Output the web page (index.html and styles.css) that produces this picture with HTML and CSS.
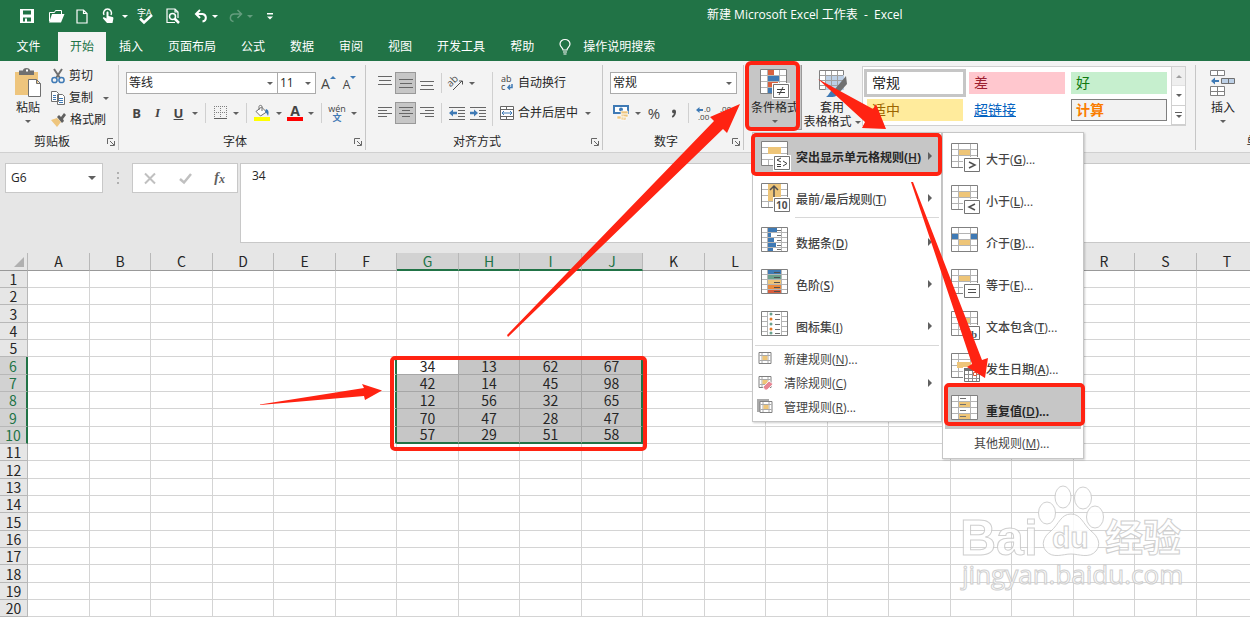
FILE: index.html
```html
<!DOCTYPE html>
<html lang="zh-CN">
<head>
<meta charset="utf-8">
<title>新建 Microsoft Excel 工作表 - Excel</title>
<link rel="stylesheet" href="styles.css">
</head>
<body>
<svg class="defs" aria-hidden="true">
  <symbol id="grid" viewBox="0 0 30 30">
    <path fill="#fff" stroke="#808080" d="M.5.5h26v24H.5z"/>
    <path fill="none" stroke="#b4b4b4" d="M1 6.500h25M1 12.500h25M1 18.500h25M7.500 1v23M19.500 1v23"/>
  </symbol>
  <symbol id="badge" viewBox="0 0 30 30">
    <path fill="#fff" d="M12 14h18v16H12z"/>
    <path fill="#fff" stroke="#737373" d="M13.500 15.500h15v13h-15z"/>
  </symbol>
  <symbol id="rows" viewBox="0 0 30 30">
    <path fill="#fff" stroke="#808080" d="M.5.5h26v24H.5z"/>
    <path fill="none" stroke="#b4b4b4" d="M1 5.500h25M1 10.500h25M1 15.500h25M1 20.500h25M6.500 1v23M20.500 1v23"/>
  </symbol>
  <symbol id="mini" viewBox="0 0 16 16">
    <path fill="#fff" stroke="#808080" d="M1.500 1.500h12v11h-12z"/>
    <path fill="none" stroke="#aaa" d="M2 4.500h11M2 9.500h11M4.500 2v10M10.500 2v10"/>
    <path fill="#eec578" d="M5 5h5v4H5z"/>
  </symbol>
  <symbol id="launch" viewBox="0 0 10 10">
    <path fill="none" stroke="#666" d="M1.500 7V1.500H7M4 4l4 4M8.500 4v4.500H4"/>
  </symbol>
</svg>

<div class="app">
<header class="titlebar">
  <div class="qat">
    <button aria-label="保存"><svg width="14" height="14"><path fill="#fff" fill-rule="evenodd" d="M0 0h14v14H0zM3 1.500v4h8v-4zM3 8.500v4h2v-3h2v3h4v-4z"/></svg></button>
    <button aria-label="打开"><svg width="17" height="14"><path fill="none" stroke="#fff" d="M1.500 12V3.500h5l1-2h6V5"/><path fill="#fff" d="M4 5h12.500L13 13.500H1z"/></svg></button>
    <button aria-label="新建"><svg width="12" height="15"><path fill="none" stroke="#fff" stroke-width="1.200" d="M1 1h6.500L11 4.500V14H1zM7.500 1v3.500H11"/></svg></button>
    <button class="touch" aria-label="触摸模式"><svg width="14" height="16"><path fill="none" stroke="#fff" stroke-width="1.500" d="M2 7a4 4 0 1 1 7 0"/><path fill="#fff" d="M4.500 4.500c0-1.500 2-1.500 2 0V8l4 1c1 .3 1 1 .8 2l-.8 4H5L1 10.500c-.5-1 .8-1.500 1.500-.9l2 1z"/></svg><i class="caret"></i></button>
    <button aria-label="拼写检查" class="spell"><svg width="18" height="17"><text x="0" y="8" font-size="9" fill="#fff">字A</text><path fill="none" stroke="#fff" stroke-width="2.500" d="M3 10.500l4 4L15 7"/></svg></button>
    <button aria-label="打印预览"><svg width="14" height="16"><path fill="none" stroke="#fff" stroke-width="1.200" d="M9 14.500H1V1h8l3 3v6M9 1v3h3"/><circle cx="6.500" cy="8.500" r="3" fill="none" stroke="#fff" stroke-width="1.500"/><path stroke="#fff" stroke-width="2.500" d="M8.500 10.500l4.500 4.500"/></svg></button>
    <button class="undo" aria-label="撤消"><svg width="14" height="14"><path fill="none" stroke="#fff" stroke-width="2" d="M2 5h6.500a4 3.800 0 0 1 0 7.500"/><path fill="none" stroke="#fff" stroke-width="2" d="M6 1L2 5l4 4"/></svg><i class="caret"></i></button>
    <button class="undo faded" aria-label="恢复"><svg width="14" height="14"><path fill="none" stroke="#fff" stroke-width="1.500" d="M12 5H5.500a4 3.800 0 0 0-1 7.500M8.500 1l4 4-4 4"/></svg><i class="caret"></i></button>
    <button class="more" aria-label="自定义快速访问工具栏"><svg width="6" height="7"><path fill="#fff" d="M0 0h6v1.500H0zM0 3.500h6L3 6.500z"/></svg></button>
  </div>
  <h1>新建 Microsoft Excel 工作表 &nbsp;-&nbsp; Excel</h1>
</header>
<nav class="tabs">
  <button class="file">文件</button>
  <button class="on">开始</button>
  <button>插入</button>
  <button>页面布局</button>
  <button>公式</button>
  <button>数据</button>
  <button>审阅</button>
  <button>视图</button>
  <button>开发工具</button>
  <button>帮助</button>
  <button class="tell"><svg width="12" height="16"><path fill="none" stroke="#fff" stroke-width="1.200" d="M4 11C4 8.500 1 8 1 5a5 4.500 0 0 1 10 0c0 3-3 3.500-3 6zM4 13h4M4.500 15h3"/></svg>操作说明搜索</button>
</nav>

<section class="ribbon">
  <div class="group clip">
    <div class="body">
      <button class="big paste"><svg width="28" height="30"><path fill="#eec57d" d="M1 4h23v23H1z"/><path fill="#707070" d="M5 2.500h4a3.500 2.500 0 0 1 7 0h4V7H5z"/><path fill="#fff" d="M12 1.500h2v2h-2z"/><path fill="#fff" stroke="#707070" d="M14.500 11.500h8l4 4v13h-12zM22.500 11.500v4h4"/></svg>粘贴<i class="caret"></i></button>
      <div class="stack">
        <button><svg width="14" height="15"><path stroke="#707070" stroke-width="2" d="M3 0l6 9M11 0L5 9"/><g fill="none" stroke="#3f7ab5" stroke-width="1.500"><circle cx="3.500" cy="11" r="2.600"/><circle cx="10.500" cy="11" r="2.600"/></g></svg>剪切</button>
        <button><svg width="14" height="14"><path fill="#fff" stroke="#707070" d="M.5.5h5l2 2v8h-7zM6.500 3.500h5l2 2v8h-7z"/><path stroke="#3f7ab5" d="M2 4.500h3M2 6.500h3M2 8.500h3M8 7.500h4M8 9.500h4M8 11.500h4"/></svg>复制<i class="caret"></i></button>
        <button><svg width="15" height="14"><path fill="#eec57d" d="M0 7l6-2 4 4-4 5z"/><path fill="#606060" d="M6 4l2-2 2 2 3-4 2 2-3 4 1 2-2 2z"/></svg>格式刷</button>
      </div>
    </div>
    <footer><span>剪贴板</span><svg class="launch"><use href="#launch"/></svg></footer>
  </div>

  <div class="group font">
    <div class="body rows">
      <div class="row">
        <label class="combo wide"><select aria-label="字体"><option>等线</option></select><i class="caret"></i></label>
        <label class="combo size"><select aria-label="字号"><option>11</option></select><i class="caret"></i></label>
        <button class="t21 grow" aria-label="增大字号"><span>A</span><i class="up"></i></button>
        <button class="t21 shrink" aria-label="减小字号"><span>A</span><i class="down"></i></button>
      </div>
      <div class="row">
        <button class="t21"><b>B</b></button>
        <button class="t21 serif"><i>I</i></button>
        <button class="t21"><u><b>U</b></u></button>
        <button class="drop" aria-label="下划线"><i class="caret"></i></button>
        <i class="sep"></i>
        <button class="t20" aria-label="边框"><svg width="13" height="14"><path fill="none" stroke="#808080" stroke-dasharray="1 1" d="M.5 0v12M6.500 0v12M12.500 0v12M0 .5h13M0 6.500h13"/><path stroke="#606060" d="M0 12.500h13"/></svg></button>
        <button class="drop" aria-label="边框选项"><i class="caret"></i></button>
        <i class="sep"></i>
        <button class="t22" aria-label="填充颜色"><svg width="16" height="16"><path fill="#fff" stroke="#707070" d="M2 6.500L7.500 2l5 5-6 4zM5 5V1.500c0-1.500 3-1.500 3 0V6"/><path fill="#3f7ab5" d="M12 4c3 1 3 4 2 7-1-2-1-3-3-4z"/><path fill="#ff0" d="M0 12h16v4H0z"/></svg></button>
        <button class="drop" aria-label="填充颜色选项"><i class="caret"></i></button>
        <button class="t20 color" aria-label="字体颜色"><b>A</b></button>
        <button class="drop" aria-label="字体颜色选项"><i class="caret"></i></button>
        <i class="sep"></i>
        <button class="t22 wen" aria-label="拼音"><span>wén</span><span class="blue">文</span></button>
        <button class="drop" aria-label="拼音选项"><i class="caret"></i></button>
      </div>
    </div>
    <footer><span>字体</span><svg class="launch"><use href="#launch"/></svg></footer>
  </div>

  <div class="group align">
    <div class="body">
      <div class="rows">
        <div class="row">
          <button class="t21" aria-label="顶端对齐"><svg width="14" height="14"><path stroke="#666" d="M0 .5h14M1 4.500h12M0 8.500h14"/></svg></button>
          <button class="t21 pressed" aria-label="垂直居中"><svg width="14" height="14"><path stroke="#666" d="M0 3.500h14M1 7.500h12M0 11.500h14"/></svg></button>
          <button class="t21" aria-label="底端对齐"><svg width="14" height="14"><path stroke="#666" d="M0 5.500h14M1 9.500h12M0 13.500h14"/></svg></button>
          <i class="sep"></i>
          <button class="t20" aria-label="方向"><svg width="16" height="16"><text transform="rotate(-45 6 9)" x="1" y="9" font-size="10" fill="#505050">ab</text><path fill="none" stroke="#505050" d="M5 15L14 6M11 6h3.500v3.500"/></svg></button>
          <button class="drop" aria-label="方向选项"><i class="caret"></i></button>
        </div>
        <div class="row">
          <button class="t21" aria-label="左对齐"><svg width="14" height="14"><path stroke="#666" d="M0 1.500h14M0 4.500h9M0 7.500h14M0 10.500h9"/></svg></button>
          <button class="t21 pressed" aria-label="居中"><svg width="14" height="14"><path stroke="#666" d="M0 1.500h14M3 4.500h8M0 7.500h14M3 10.500h8"/></svg></button>
          <button class="t21" aria-label="右对齐"><svg width="14" height="14"><path stroke="#666" d="M0 1.500h14M5 4.500h9M0 7.500h14M5 10.500h9"/></svg></button>
          <i class="sep"></i>
          <button class="t21" aria-label="减少缩进"><svg width="16" height="13"><path stroke="#666" d="M0 .5h16M9 3.500h7M9 6.500h7M9 9.500h7M0 12.500h16"/><path fill="#3f7ab5" d="M0 6l4-3.500v2.300h4v2.400H4v2.300z"/></svg></button>
          <button class="t21" aria-label="增加缩进"><svg width="16" height="13"><path stroke="#666" d="M0 .5h16M9 3.500h7M9 6.500h7M9 9.500h7M0 12.500h16"/><path fill="#3f7ab5" d="M8 6L4 2.500v2.300H0v2.400h4v2.300z"/></svg></button>
        </div>
      </div>
      <i class="sep tall"></i>
      <div class="rows">
        <button class="row text"><svg width="14" height="16"><text x="1" y="7" font-size="9" fill="#404040">ab</text><text x="1" y="15" font-size="9" fill="#404040">c</text><path fill="none" stroke="#3f7ab5" stroke-width="1.500" d="M12 9v3.500H8M10 10l-2 2.500 2 2"/></svg>自动换行</button>
        <div class="row"><button class="row text"><svg width="14" height="14"><path fill="#fff" stroke="#666" d="M.5.5h13v13H.5zM.5 3.500h13M.5 10.500h13M6.500.5v3M6.500 10.500v3"/><path fill="none" stroke="#3f7ab5" d="M2 7h10M4 5L2 7l2 2M10 5l2 2-2 2"/></svg>合并后居中</button><button class="drop mrg" aria-label="合并选项"><i class="caret"></i></button></div>
      </div>
    </div>
    <footer><span>对齐方式</span><svg class="launch"><use href="#launch"/></svg></footer>
  </div>

  <div class="group number">
    <div class="body rows">
      <div class="row"><label class="combo format"><select aria-label="数字格式"><option>常规</option></select><i class="caret"></i></label></div>
      <div class="row">
        <button class="t22" aria-label="会计数字格式"><svg width="16" height="16"><path fill="#fff" stroke="#3f7ab5" stroke-width="2" d="M1 1h14v7H1z"/><circle cx="8" cy="4.500" r="2" fill="#3f7ab5"/><path fill="#eec57d" stroke="#fff" stroke-width=".6" d="M8 6h7v3H8zM8 9h7v3H8zM4 11h7v3H4zM8 12h5v3H8z"/></svg></button>
        <button class="drop" aria-label="会计数字格式选项"><i class="caret"></i></button>
        <button class="t20 pct">%</button>
        <button class="t20" aria-label="千位分隔样式"><svg width="6" height="9"><circle cx="3" cy="2.500" r="2" fill="#505050"/><path fill="none" stroke="#505050" stroke-width="1.500" d="M4.200 2.500c0 3-1 4.500-3 5.500"/></svg></button>
        <i class="sep"></i>
        <button class="t22" aria-label="增加小数位数"><svg width="16" height="15"><text x="8" y="6" font-size="8" fill="#404040">.0</text><text x="2" y="14" font-size="8" fill="#404040">.00</text><path fill="#3f7ab5" d="M0 4l3.500-3v2H7v2H3.500v2z"/></svg></button>
        <button class="t22" aria-label="减少小数位数"><svg width="16" height="15"><text x="2" y="6" font-size="8" fill="#404040">.00</text><text x="8" y="14" font-size="8" fill="#404040">.0</text><path fill="#3f7ab5" d="M8 11L4.500 8v2H1v2h3.500v2z"/></svg></button>
      </div>
    </div>
    <footer><span>数字</span><svg class="launch"><use href="#launch"/></svg></footer>
  </div>

  <div class="group styles">
    <div class="body">
      <button class="big cf"><svg width="30" height="30"><use href="#grid" width="30" height="30"/><path fill="#d9613f" d="M8 1h6v5H8zM8 13h10v5H8z"/><path fill="#3f7ab5" d="M8 7h11v5H8zM8 19h5v5H8z"/><use href="#badge" width="30" height="30"/><path fill="none" stroke="#404040" d="M17 20.500h8M17 23.500h8M23 18l-4 8"/></svg>条件格式<i class="caret"></i></button>
      <button class="big fmt"><svg width="30" height="28"><path fill="#fff" stroke="#808080" d="M2.500.5h24v19h-24z"/><path fill="#bdd0e6" d="M8 5h19v15H8z"/><path fill="none" stroke="#a0a0a0" d="M3 5.500h23M3 10.500h23M3 15.500h23M8.500 1v19M14.500 1v19M20.500 1v19"/><path fill="#707070" d="M29 6l1 8-8 9-4-4z"/><path fill="#3f7ab5" d="M18 19l4 4c-3 5-8 4-13 4 4-2 3-7 9-8z"/></svg>套用<span>表格格式<i class="caret"></i></span></button>
      <div class="gallery">
        <div class="tiles">
          <button class="normal">常规</button><button class="bad">差</button><button class="good">好</button>
          <button class="neutral">适中</button><button class="hyper">超链接</button><button class="calc">计算</button>
        </div>
        <div class="scroller"><button class="off" aria-label="上"><i class="caret flip"></i></button><button aria-label="下"><i class="caret"></i></button><button aria-label="其他"><i class="bar"></i><i class="caret"></i></button></div>
      </div>
    </div>
    <footer></footer>
  </div>

  <div class="group cells">
    <div class="body">
      <button class="big"><svg width="26" height="28"><path fill="#fff" stroke="#808080" d="M.5 1.500h14v5H.5zM7.500 1.500v5M.5 17.500h14v9H.5zM7.500 17.500v9M.5 22.500h14"/><path fill="#bdd0e6" stroke="#707070" d="M11.500 9.500h13v5h-13zM18.500 9.500v5"/><path fill="#3f7ab5" d="M1 12l4-3.500V11h4v2H5v2.500z"/></svg>插入<i class="caret"></i></button>
    </div>
    <footer><span>单元格</span></footer>
  </div>
</section>

<section class="formula">
  <label class="combo namebox"><input aria-label="名称框" value="G6"><i class="caret"></i></label>
  <div class="dots"><i></i><i></i><i></i></div>
  <div class="fx">
    <button aria-label="取消"><svg width="12" height="11"><path stroke="#c0c0c0" stroke-width="2" d="M1 .5l10 10M11 .5l-10 10"/></svg></button>
    <button aria-label="输入"><svg width="13" height="11"><path fill="none" stroke="#c0c0c0" stroke-width="2.500" d="M1 6l4 3.500L12 1"/></svg></button>
    <button class="fn">f<small>x</small></button>
  </div>
  <textarea aria-label="编辑栏">34</textarea>
</section>

<main class="sheet"><table id="sheet"></table></main>
</div>

<div class="menu rules" role="menu">
  <button class="item on"><svg class="ic"><use href="#grid" width="30" height="30"/><path fill="#fff" d="M7 1h13v5H7zM7 13h13v5H7z"/><path fill="#eec578" d="M7 6h13v7H7z"/><use href="#badge" width="30" height="30"/><path fill="none" stroke="#404040" d="M20 17l-4 2 4 2M16 23.500h4M16 25.500h4M22 20l4 2.500-4 2.500"/></svg><span>突出显示单元格规则(<u>H</u>)</span><i class="arrow"></i></button>
  <button class="item"><svg class="ic"><use href="#grid" width="30" height="30"/><path fill="#eec578" d="M7 1h13v17H7z"/><path fill="none" stroke="#505050" stroke-width="1.500" d="M13 14V3M9 7l4-4 4 4"/><use href="#badge" width="30" height="30"/><text x="15" y="26" font-size="10" font-weight="700" fill="#505050">10</text></svg><span>最前/最后规则(<u>T</u>)</span><i class="arrow"></i></button>
  <hr class="inset">
  <button class="item"><svg class="ic"><use href="#rows" width="30" height="30"/><path fill="#3f7ab5" d="M7 1h9v4H7zM7 6h3v4H7zM7 11h6v4H7zM7 16h8v4H7zM7 21h5v3H7z"/><path stroke="#707070" d="M16 3.500h4M16 8.500h4M16 13.500h4M16 18.500h4M16 22.500h4"/></svg><span>数据条(<u>D</u>)</span><i class="arrow"></i></button>
  <button class="item"><svg class="ic"><use href="#rows" width="30" height="30"/><path fill="#3f7ab5" d="M7 1h13v4H7z"/><path fill="#6aa08d" d="M7 6h13v4H7z"/><path fill="#eec578" d="M7 11h13v4H7z"/><path fill="#ea8b3c" d="M7 16h13v4H7z"/><path fill="#d65e3e" d="M7 21h13v3H7z"/><path stroke="#505050" d="M13 3.500h6M13 8.500h6M13 13.500h6M13 18.500h6M13 22.500h6"/></svg><span>色阶(<u>S</u>)</span><i class="arrow"></i></button>
  <button class="item"><svg class="ic"><use href="#rows" width="30" height="30"/><path fill="#fff" d="M7 1h13v23H7z"/><g fill="#6aa08d"><circle cx="10" cy="3" r="1.500"/><circle cx="10" cy="13" r="1.500"/><circle cx="10" cy="22" r="1.500"/></g><g fill="#e87722"><circle cx="10" cy="8" r="1.500"/><circle cx="10" cy="18" r="1.500"/></g><path stroke="#707070" d="M14 3.500h5M14 8.500h5M14 13.500h5M14 18.500h5M14 22.500h5"/></svg><span>图标集(<u>I</u>)</span><i class="arrow"></i></button>
  <hr>
  <button class="item small"><svg class="mi"><use href="#mini"/></svg><span>新建规则(<u>N</u>)...</span></button>
  <button class="item small"><svg class="mi"><use href="#mini"/><path fill="#e88593" stroke="#fff" stroke-width=".8" d="M6 12l6-6 4 3-6 6H8z"/></svg><span>清除规则(<u>C</u>)</span><i class="arrow"></i></button>
  <button class="item small"><svg class="mi"><path fill="#aaa" d="M0 0h12v3H3v10H0z"/><use href="#mini" x="1" y="1"/></svg><span>管理规则(<u>R</u>)...</span></button>
</div>

<div class="menu compare" role="menu">
  <button class="item"><svg class="ic"><use href="#grid" width="30" height="30"/><path fill="#eec578" d="M8 7h11v5H8z"/><use href="#badge" width="30" height="30"/><path fill="none" stroke="#505050" stroke-width="1.500" d="M18 19l6 3-6 3"/></svg><span>大于(<u>G</u>)...</span></button>
  <button class="item"><svg class="ic"><use href="#grid" width="30" height="30"/><path fill="#eec578" d="M8 7h11v5H8z"/><use href="#badge" width="30" height="30"/><path fill="none" stroke="#505050" stroke-width="1.500" d="M24 19l-6 3 6 3"/></svg><span>小于(<u>L</u>)...</span></button>
  <button class="item"><svg class="ic"><use href="#grid" width="30" height="30"/><path fill="#3f7ab5" d="M1 7h6v5H1zM20 7h6v5h-6z"/><path fill="#eec578" d="M8 13h11v5H8z"/></svg><span>介于(<u>B</u>)...</span></button>
  <button class="item"><svg class="ic"><use href="#grid" width="30" height="30"/><path fill="#eec578" d="M8 7h11v5H8z"/><use href="#badge" width="30" height="30"/><path stroke="#505050" d="M17 20.500h8M17 23.500h8"/></svg><span>等于(<u>E</u>)...</span></button>
  <button class="item"><svg class="ic"><use href="#grid" width="30" height="30"/><path fill="#eec578" d="M14 7h5v5h-5z"/><use href="#badge" width="30" height="30"/><text x="20" y="27" font-size="11" font-family="Liberation Serif" font-weight="700" fill="#505050">b</text></svg><span>文本包含(<u>T</u>)...</span></button>
  <button class="item"><svg class="ic"><use href="#grid" width="30" height="30"/><path fill="#eec578" d="M6 9h14v6H6z"/><use href="#badge" width="30" height="30"/><path fill="#707070" d="M13 15h16v3H13z"/><path fill="none" stroke="#909090" d="M14 21.500h14M14 25.500h14M17.500 18v10M21.500 18v10M25.500 18v10"/><path fill="#fff" stroke="#d65e3e" d="M22.500 19.500h3v3h-3z"/></svg><span>发生日期(<u>A</u>)...</span></button>
  <button class="item on"><svg class="ic"><use href="#grid" width="30" height="30"/><path fill="#eec578" d="M8 7h11v5H8zM8 19h11v5H8z"/><path stroke="#707070" d="M9 3.500h6M9 9.500h6M9 15.500h6M9 21.500h6"/></svg><span>重复值(<u>D</u>)...</span></button>
  <button class="item other"><span>其他规则(<u>M</u>)...</span></button>
</div>

<svg class="overlay watermark" width="260" height="130" aria-label="Baidu 经验">
  <g fill="#fff" stroke="#c8c8c8">
    <text class="brand" x="18" y="80" font-size="50">Bai</text>
    <ellipse cx="105" cy="38" rx="8.500" ry="11"/><ellipse cx="121" cy="22" rx="8" ry="11"/><ellipse cx="141" cy="23" rx="8.500" ry="11"/><ellipse cx="153" cy="42" rx="8.500" ry="11"/>
    <path d="M129 39c10 0 12 10 20 17 8 6 10 14 5 20-7 8-17 3-25 3s-18 5-25-3c-5-6-3-14 5-20 8-7 10-17 20-17z"/>
    <text class="brand" x="110" y="73" font-size="30">du</text>
    <text class="cn" x="163" y="76" font-size="38">经验</text>
    <text class="url" x="20" y="109" font-size="26">jingyan.baidu.com</text>
  </g>
</svg>

<svg class="overlay marks" width="1250" height="618" aria-hidden="true">
  <g fill="none" stroke="#ff2312" stroke-width="4">
    <rect x="747" y="63" width="51" height="66" rx="4"/>
    <rect x="753" y="135" width="187" height="39" rx="3"/>
    <rect x="946" y="385" width="137" height="39" rx="3"/>
    <rect x="392" y="358" width="253" height="91" rx="3"/>
  </g>
  <g fill="#ff2312">
    <path d="M260 404.500L364 388l-2-4 20 6.500-17 9.500-1-4-104 9z"/>
    <path d="M507 335L714 121l-4-4 30-13-13 29-4-4L508 337z"/>
    <path d="M818 79L873 109l3-5 10 25-24-1 3-6z"/>
    <path d="M911 182L972 364l-5 3 18 11 3-20-6 2L913 182z"/>
  </g>
</svg>
<script src="script.js"></script>
</body>
</html>
```
FILE: styles.css
```css
* { box-sizing: border-box; }
body {
  margin: 0;
  position: relative;
  overflow: hidden;
  font: 12px/16px "Open Sans", "Noto Sans CJK SC", sans-serif;
  color: #262626;
  background: #e6e6e6;
}
button, input, select, textarea { font: inherit; color: inherit; }
button { border: 0; padding: 0; margin: 0; background: none; white-space: nowrap; }
svg { display: block; flex: none; overflow: visible; }
.defs { position: absolute; width: 0; height: 0; }
.app { display: flex; flex-direction: column; height: 100vh; min-width: 0; }

.caret {
  width: 0; height: 0; flex: none;
  border: 3px solid transparent;
  border-top-color: #606060;
  border-bottom: 0;
}
.caret.flip { transform: rotate(180deg); }

/* Title bar */
.titlebar { flex: none; display: flex; height: 32px; background: #217346; color: #fff; }
.titlebar .caret { border-top-color: #fff; }
.titlebar h1 { flex: none; width: 543px; margin: 0; font: inherit; line-height: 29px; }
.qat { flex: 1; display: flex; align-items: center; padding-left: 20px; }
.qat button { width: 28px; height: 32px; display: flex; align-items: center; gap: 6px; }
.qat .touch { width: 35px; margin-left: -2px; }
.qat .spell { width: 29px; }
.qat .undo { width: 35px; gap: 4px; }
.qat .faded { opacity: .3; }
.qat .more { padding-left: 3px; }

/* Tabs */
.tabs { flex: none; display: flex; gap: 1px; height: 29px; background: #217346; color: #fff; }
.tabs button { padding: 0 12px; color: #fff; }
.tabs .file { width: 57px; }
.tabs .on { background: #f3f3f3; color: #217346; }
.tabs .tell { display: flex; align-items: center; gap: 12px; padding-left: 12px; }

/* Ribbon */
.ribbon { flex: none; display: flex; height: 92px; padding: 4px 0 2px; overflow: hidden; background: #f3f3f3; border-bottom: 1px solid #d0d0d0; }
.group { flex: none; display: flex; flex-direction: column; border-right: 1px solid #c6c6c6; }
.group .body { flex: 1; display: flex; }
.group footer { display: flex; justify-content: center; height: 16px; }
.group footer span { flex: 1; text-align: center; }
.launch { width: 10px; height: 10px; margin: 3px 2px 0 2px; }
.rows { display: flex; flex-direction: column; gap: 8px; padding-top: 7px; }
.group .rows { flex-direction: column; }
.row { display: flex; align-items: center; height: 22px; }
.row > button { display: flex; justify-content: center; align-items: center; height: 22px; font-size: 13px; color: #444; }
.t20 { width: 20px; }
.t21 { width: 21px; }
.t22 { width: 22px; }
.drop { width: 12px; }
.sep { width: 1px; height: 20px; margin: 0 4px; background: #d0d0d0; }
.sep.tall { height: 54px; margin-top: 7px; }
.pressed { background: #c6c6c6; border: 1px solid #999; }
.serif { font-family: "Liberation Serif", serif; font-weight: 700; }
.row > .pct { font-size: 15px; }
.big { display: flex; flex-direction: column; align-items: center; line-height: 14px; }
.big .caret { margin-top: 5px; }

.clip { width: 119px; }
.paste { width: 28px; margin: 3px 9px 0 14px; }
.paste svg { margin-bottom: 3px; }
.stack { display: flex; flex-direction: column; }
.stack button { display: flex; align-items: center; gap: 4px; height: 22px; }
.stack .caret { margin-left: 6px; }

.combo { display: grid; align-items: center; height: 22px; background: #fff; border: 1px solid #ababab; }
.combo > * { grid-area: 1 / 1; }
.combo .caret { justify-self: end; margin-right: 4px; }
.combo select, .combo input { appearance: none; width: 100%; height: 20px; padding: 0 2px; border: 0; background: none; outline: 0; font-size: 12px; line-height: 20px; }
.wide { width: 152px; }
.size { width: 38px; margin-right: 2px; border-left: 0; }
.format { width: 127px; }

.font { width: 247px; }
.font .rows { padding-left: 7px; }
.row .grow { font-size: 14px; align-items: flex-start; line-height: 24px; }
.row .shrink { font-size: 12px; align-items: flex-start; line-height: 26px; }
.up, .down { border: 3px solid transparent; margin-top: 4px; }
.up { border-bottom-color: #3f7ab5; border-top: 0; }
.down { border-top-color: #3f7ab5; border-bottom: 0; }
.row .color { height: 16px; line-height: 12px; align-items: flex-start; border-bottom: 4px solid #f00; width: 16px; margin: 0 2px; font-size: 14px; }
.row .wen { flex-direction: column; font-size: 9px; line-height: 9px; }
.blue { color: #3f7ab5; font-weight: 700; }

.align { width: 237px; }
.align > .body { padding-left: 8px; }
.align .body > .rows:last-child { gap: 8px; }
.row.text, .row > .text { gap: 4px; padding-left: 3px; font-size: 12px; color: #262626; }
.mrg { margin-left: 4px; }

.number { width: 141px; }
.number .rows { padding-left: 7px; }

.styles { flex: none; width: 452px; }
.cf { width: 54px; height: 65px; margin-left: 4px; padding-top: 4px; background: #c6c6c6; border: 1px solid #999; border-top: 0; }
.cf svg { margin-bottom: 2px; }
.fmt { width: 60px; padding-top: 5px; }
.fmt svg { margin-bottom: 3px; }
.fmt span { display: flex; gap: 3px; }
.fmt .caret { margin-top: 6px; }
.gallery { display: flex; height: 60px; margin-top: 1px; background: #fff; border: 1px solid #d0d0d0; }
.tiles { display: grid; grid-template-columns: repeat(3, 96px); grid-auto-rows: 22px; gap: 5px 6px; padding: 5px 4px 0; }
.tiles button { padding-left: 5px; text-align: left; font-size: 14px; line-height: 20px; }
.normal { outline: 3px solid #c6c6c6; }
.bad { background: #ffc7ce; color: #9c2030; }
.good { background: #c6efce; color: #107a10; }
.neutral { background: #ffeb9c; color: #9c6500; }
.hyper { color: #0563c1; text-decoration: underline; }
.calc { background: #f2f2f2; border: 1px solid #7f7f7f; color: #fa7d00; font-weight: 700; }
.tiles .calc { padding-left: 4px; line-height: 18px; }
.scroller { display: flex; flex-direction: column; width: 14px; border-left: 1px solid #d0d0d0; }
.scroller button { flex: 1; display: flex; flex-direction: column; align-items: center; justify-content: center; gap: 2px; border-bottom: 1px solid #d0d0d0; }
.scroller .off { background: #e6e6e6; opacity: .6; }
.bar { width: 7px; height: 1px; background: #606060; }

.cells { width: 138px; }
.cells .big { margin: 4px 0 0 14px; }
.cells svg { margin-bottom: 4px; }

/* Formula bar */
.formula { flex: none; display: flex; align-items: flex-start; height: 100px; padding-top: 10px; }
.namebox { width: 98px; height: 30px; margin-left: 5px; border-color: #c8c8c8; }
.namebox .caret { border-width: 4px 4px 0; margin-right: 6px; }
.combo.namebox input { padding-left: 5px; font-size: 12px; }
.dots { display: grid; gap: 3px; width: 29px; justify-content: center; padding-top: 9px; }
.dots i { width: 2px; height: 2px; background: #b0b0b0; }
.fx { display: flex; width: 106px; height: 30px; margin-right: 2px; background: #fff; border: 1px solid #c8c8c8; }
.fx button { flex: 1; display: flex; align-items: center; justify-content: center; }
.fx .fn { font: italic 700 14px "Liberation Serif", serif; color: #606060; }
.fn small { font-size: 12px; padding-top: 3px; }
.formula textarea { flex: 1; height: 80px; padding: 4px 11px; border: 1px solid #c8c8c8; border-right: 0; resize: none; outline: 0; background: #fff; }

/* Sheet */
.sheet { flex: 1; overflow: hidden; background: #fff; }
table { table-layout: fixed; width: 1258px; border-collapse: separate; border-spacing: 0; font: 14px/16px "Noto Sans CJK SC", sans-serif; }
col:first-child { width: 28px; }
col { width: 61px; }
col:nth-child(even) { width: 62px; }
th, td { padding: 0; height: 17px; overflow: hidden; text-align: center; font-weight: 400; border: 0 solid #d4d4d4; border-width: 0 1px 1px 0; }
tr:nth-child(3n) > * { height: 18px; }
th { background: #e6e6e6; border-color: #b8b8b8; }
thead th { height: 18px; border-bottom-color: #999; line-height: 17px; }
.corner i { display: block; width: 0; margin: 0 3px 0 auto; border: 5px solid transparent; border-right-color: #b0b0b0; border-bottom-color: #b0b0b0; }
th.hot { background: #d2d2d2; color: #217346; }
thead .hot { border-bottom: 2px solid #217346; line-height: 16px; }
tbody .hot { border-right: 2px solid #217346; }
.sel { background: #c6c6c6; border-color: #a6a6a6; }
.sel.active { background: #fff; }
.edge-l { border-right: 2px solid #217346; }
.sel.edge-r { border-right: 2px solid #217346; }
.sel.edge-b { border-bottom: 2px solid #217346; line-height: 15px; }

/* Menus */
.menu { position: absolute; top: 132px; display: flex; flex-direction: column; padding: 0 2px 2px; background: #fff; border: 1px solid #c6c6c6; box-shadow: 1px 1px 2px #0003; }
.rules { left: 752px; width: 190px; }
.compare { left: 942px; width: 142px; padding: 2px 2px 1px; }
.item { display: flex; align-items: center; height: 42px; padding: 4px 7px 0 6px; color: #444; font-weight: 500; }
.item u { font-weight: 600; }
.item.on { background: #c6c6c6; color: #262626; font-weight: 700; }
.item span { flex: 1; text-align: left; padding: 3px 0 0 5px; }
.ic { width: 30px; height: 30px; }
.arrow { border: 4px solid transparent; border-left-color: #606060; border-right: 0; }
.menu hr { width: 100%; height: 1px; margin: 0 0 1px; border: 0; background: #d8d8d8; }
.menu .inset { width: 144px; margin-left: auto; }
.item.small { height: 24px; padding: 0 7px 0 2px; font-weight: 400; }
.small span { padding: 1px 0 0 11px; }
.item.small span { padding: 1px 0 0 10px; }
.small u, .other u { font-weight: 400; }
.mi { width: 17px; height: 16px; }
.mi use { width: 16px; height: 16px; }
.item.other { height: 28px; padding: 0 0 0 24px; font-weight: 400; }
.item.other span { padding-top: 2px; }

/* Overlays */
.overlay { position: absolute; pointer-events: none; }
.watermark { left: 942px; top: 475px; opacity: .85; }
.brand { font-family: "Liberation Sans", sans-serif; font-weight: 700; }
.cn { font-family: "Noto Sans CJK SC", sans-serif; font-weight: 700; }
.url { font-family: "Open Sans", sans-serif; }
.marks { left: 0; top: 0; }
```
FILE: script.js
```js
const letters = "ABCDEFGHIJKLMNOPQRST".split("");
const values = {
  6: [34, 13, 62, 67],
  7: [42, 14, 45, 98],
  8: [12, 56, 32, 65],
  9: [70, 47, 28, 47],
  10: [57, 29, 51, 58]
};
const first = 6, last = 9;

let html = "<colgroup><col>" + "<col>".repeat(letters.length) + "</colgroup><thead><tr><th class='corner'><i></i></th>";
letters.forEach((l, c) => {
  html += `<th class="${c >= first && c <= last ? "hot" : ""}">${l}</th>`;
});
html += "</tr></thead><tbody>";
for (let r = 1; r <= 20; r++) {
  const row = values[r];
  html += `<tr><th class="${row ? "hot" : ""}">${r}</th>`;
  letters.forEach((l, c) => {
    const cls = [];
    let text = "";
    if (row && c === first - 1) cls.push("edge-l");
    if (row && c >= first && c <= last) {
      text = row[c - first];
      cls.push("sel");
      if (c === last) cls.push("edge-r");
      if (r === 10) cls.push("edge-b");
      if (r === 6 && c === first) cls.push("active");
    }
    html += `<td class="${cls.join(" ")}">${text}</td>`;
  });
  html += "</tr>";
}
document.getElementById("sheet").innerHTML = html + "</tbody>";
```
